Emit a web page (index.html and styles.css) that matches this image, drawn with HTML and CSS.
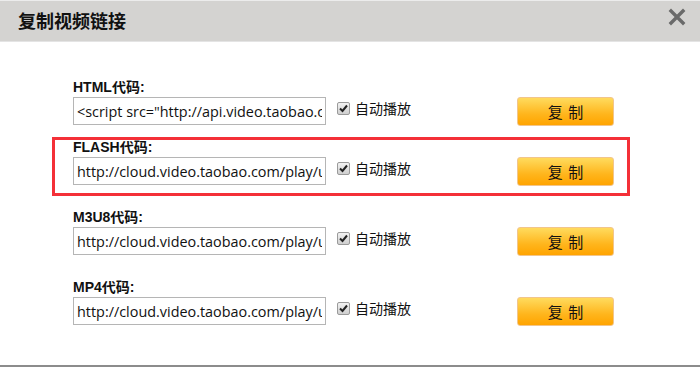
FILE: index.html
```html
<!DOCTYPE html>
<html lang="zh-CN">

<head>
    <meta charset="UTF-8">
    <meta name="viewport" content="width=device-width, initial-scale=1.0">
    <title>复制视频链接</title>
    <link rel="stylesheet" href="styles.css">
</head>

<body>
    <div class="dialog">
        <div class="dlg-head">
            <h2>复制视频链接</h2>
            <span class="close">
                <svg width="18" height="18" viewBox="0 0 18 18">
                    <path d="M3 3 L15 15 M15 3 L3 15" stroke="#6a6a6a" stroke-width="3.4" stroke-linecap="square" />
                </svg>
            </span>
        </div>

        <div class="dlg-body">
            <div class="row row-first">
                <div class="lbl">HTML代码:</div>
                <div class="line">
                    <input class="code" value='&lt;script src="http://api.video.taobao.com/video/player.js"&gt;&lt;/script&gt;' readonly />
                    <label class="auto">
                        <span class="check"><svg width="9" height="9" viewBox="0 0 9 9"><path d="M1 4.5 L3.5 7 L8 1.5" stroke="#222" stroke-width="2" fill="none" /></svg></span>
                        自动播放
                    </label>
                    <button class="btn">复 制</button>
                </div>
            </div>

            <div class="row">
                <div class="lbl">FLASH代码:</div>
                <div class="line">
                    <input class="code" value="http://cloud.video.taobao.com/play/u/1234/p/1/e/1/t/1/fv/102/28.swf" readonly />
                    <label class="auto">
                        <span class="check"><svg width="9" height="9" viewBox="0 0 9 9"><path d="M1 4.5 L3.5 7 L8 1.5" stroke="#222" stroke-width="2" fill="none" /></svg></span>
                        自动播放
                    </label>
                    <button class="btn">复 制</button>
                </div>
            </div>

            <div class="row">
                <div class="lbl">M3U8代码:</div>
                <div class="line">
                    <input class="code" value="http://cloud.video.taobao.com/play/u/1234/p/1/e/6/t/1/28.m3u8" readonly />
                    <label class="auto">
                        <span class="check"><svg width="9" height="9" viewBox="0 0 9 9"><path d="M1 4.5 L3.5 7 L8 1.5" stroke="#222" stroke-width="2" fill="none" /></svg></span>
                        自动播放
                    </label>
                    <button class="btn">复 制</button>
                </div>
            </div>

            <div class="row">
                <div class="lbl">MP4代码:</div>
                <div class="line">
                    <input class="code" value="http://cloud.video.taobao.com/play/u/1234/p/1/e/6/t/1/28.mp4" readonly />
                    <label class="auto">
                        <span class="check"><svg width="9" height="9" viewBox="0 0 9 9"><path d="M1 4.5 L3.5 7 L8 1.5" stroke="#222" stroke-width="2" fill="none" /></svg></span>
                        自动播放
                    </label>
                    <button class="btn">复 制</button>
                </div>
            </div>

            <!-- highlight drawn over the flash row -->
            <div class="mark"></div>
        </div>
    </div>
</body>

</html>
```

FILE: styles.css
```css
body {
    margin: 0;
    background: #fff;
    font-family: "Liberation Sans", "Noto Sans CJK SC", sans-serif;
}

.dialog {
    width: 700px;
    height: 367px;
    background: #fff;
    box-sizing: border-box;
    border-bottom: 2px solid #8c8c8c;
}

.dlg-head {
    height: 42px;
    box-sizing: border-box;
    background: #d4d3d1;
    border-top: 1px solid #ececec;
    border-bottom: 1px solid #e4e4e4;
    display: flex;
    align-items: center;
    justify-content: space-between;
    padding: 0 14px 2px 18px;
}

.dlg-head h2 {
    margin: 0;
    font-size: 18px;
    font-weight: bold;
    color: #111;
}

.close {
    display: flex;
    margin-top: -6px;
}

.dlg-body {
    position: relative;
    padding: 37px 0 0 73px;
}

.row {
    margin-bottom: 24px;
}

.row-first {
    margin-bottom: 14px;
}

.lbl {
    font-size: 14px;
    font-weight: bold;
    color: #111;
    line-height: 16px;
    height: 18px;
}

.line {
    display: flex;
    align-items: center;
    height: 28px;
}

.code {
    width: 253px;
    height: 28px;
    box-sizing: border-box;
    border: 1px solid #b5b5b5;
    padding: 0 3px;
    margin: 0;
    font-family: "Open Sans", "Noto Sans", sans-serif;
    font-size: 14.4px;
    color: #111;
    outline: none;
}

.auto {
    width: 191px;
    display: flex;
    align-items: center;
    gap: 5px;
    padding-left: 11px;
    box-sizing: border-box;
    font-family: "Noto Sans CJK SC", sans-serif;
    font-size: 14px;
    color: #111;
    align-self: flex-start;
    padding-top: 1px;
}

.check {
    width: 13px;
    height: 13px;
    box-sizing: border-box;
    border: 1px solid #9a9a9a;
    border-radius: 2px;
    background: linear-gradient(#f2f2f2, #cfcfcf);
    display: flex;
    align-items: center;
    justify-content: center;
}

.btn {
    width: 97px;
    height: 29px;
    border: 1px solid #f2c58a;
    border-radius: 3px;
    background: linear-gradient(#ffdb5e, #ffb51c 60%, #ffa400);
    font-family: "Noto Sans CJK SC", sans-serif;
    font-size: 15px;
    letter-spacing: 1px;
    padding: 0 0 0 1px;
    color: #111;
}

.mark {
    position: absolute;
    left: 52px;
    top: 95px;
    width: 578px;
    height: 59px;
    box-sizing: border-box;
    border: 3px solid #f43038;
}
```
